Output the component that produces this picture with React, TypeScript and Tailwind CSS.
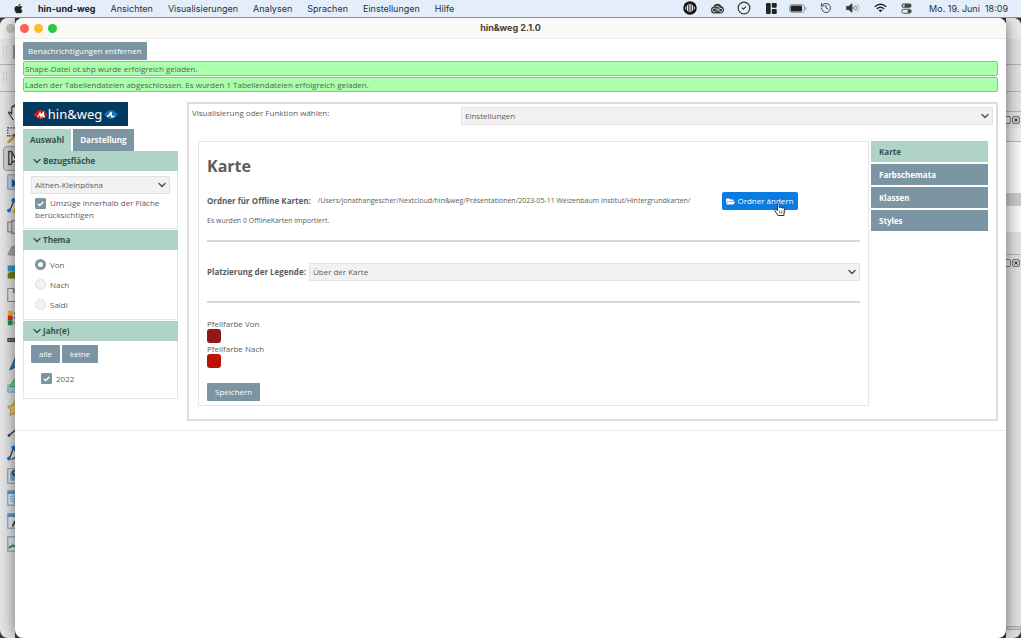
import { useState } from "react";
import type { ReactNode } from "react";
import { FaApple, FaFolderOpen } from "react-icons/fa";
import { ChevronDown, CircleCheck, History } from "lucide-react";

const menus = ["Ansichten", "Visualisierungen", "Analysen", "Sprachen", "Einstellungen", "Hilfe"];

function StatusIcons() {
  return (
    <div className="flex items-center text-[#333]">
      <span className="flex w-7 justify-center">
        <svg viewBox="0 0 28 28" className="size-3.5">
          <circle cx="14" cy="14" r="13.5" fill="#111" />
          <path d="M5.5 12v4M9 9v10M12.3 6.500v15M15.700 6.500v15M19 9v10M22.500 12v4" stroke="#fff" strokeWidth="1.900" strokeLinecap="round" />
        </svg>
      </span>
      <span className="flex w-[26px] justify-center">
        <svg viewBox="0 0 30 22" className="h-[11px] w-[15px]" fill="none">
          <path d="M8 21a7 7 0 0 1-1.500-13.600A9 9 0 0 1 23 6.500a7.500 7.500 0 0 1-1 14.500z" fill="#3a3a3a" />
          <path d="m15.500 16.500-5-5a3.500 3.500 0 1 0-2.500 6h3M11 7.500a5.500 5.500 0 0 1 8.500 3.500M13 10l6 6.500a3.600 3.600 0 1 0 .5-5l-2.500 2.500" stroke="#e3eefa" strokeWidth="1.700" />
        </svg>
      </span>
      <span className="flex w-7 justify-center">
        <CircleCheck className="size-3.5" strokeWidth={2} />
      </span>
      <span className="flex w-[26px] justify-center">
        <svg viewBox="0 0 20 20" className="size-[11px]" fill="#222">
          <rect x="0" y="0" width="8.500" height="20" rx="1.500" />
          <rect x="10.500" y="0" width="9" height="8.500" rx="1.500" />
          <rect x="10.500" y="11" width="9" height="9" rx="1.500" />
        </svg>
      </span>
      <span className="flex w-7 justify-center">
        <svg viewBox="0 0 36 18" className="h-[9px] w-[18px]">
          <rect x="1" y="1" width="30" height="16" rx="4.500" fill="none" stroke="#888" strokeWidth="1.600" />
          <rect x="3.200" y="3.200" width="23" height="11.600" rx="2.500" fill="#222" />
          <path d="M33 6c2.500 1 2.500 5 0 6z" fill="#888" />
        </svg>
      </span>
      <span className="flex w-7 justify-center">
        <History className="size-3" strokeWidth={1.8} />
      </span>
      <span className="flex w-[26px] justify-center">
        <svg viewBox="0 0 28 20" className="h-2.5 w-3.5" fill="none" stroke="#444" strokeWidth="1.800" strokeLinecap="round">
          <path d="M1 7h4l7-5.500v17L5 13H1z" fill="#333" />
          <path d="M16 7.500q2 2.500 0 5" />
          <path d="M19.500 5q4 5 0 10" stroke="#777" />
          <path d="M23 2.500q6 7.500 0 15" stroke="#aaa" />
        </svg>
      </span>
      <span className="flex w-7 justify-center">
        <svg viewBox="0 0 26 19" className="h-[10px] w-[13px]" fill="none" stroke="#222" strokeWidth="2.800">
          <path d="M1.500 7q11.500-10 23 0M5.700 11.300q7.300-6.300 14.600 0" />
          <path d="m13 18-4-4q4-3.200 8 0z" fill="#222" stroke="none" />
        </svg>
      </span>
      <span className="flex w-6 justify-center">
        <svg viewBox="0 0 22 22" className="size-[11px]">
          <rect x="1" y="1" width="20" height="8.500" rx="4.200" fill="#444" />
          <circle cx="5.500" cy="5.200" r="2.300" fill="#e3eefa" />
          <rect x="1.500" y="12.500" width="19" height="8" rx="4" fill="none" stroke="#444" strokeWidth="1.800" />
          <circle cx="16.500" cy="16.500" r="3.500" fill="#444" />
        </svg>
      </span>
    </div>
  );
}

function MenuBar() {
  return (
    <header className="flex h-[17px] items-center bg-[#e3eefa] pr-[13px] pb-px pl-[13px] font-[Inter,sans-serif] text-[9px] leading-none text-[#2c2f33]">
      <FaApple className="mr-3.5 size-[11px] text-[#222]" />
      <nav className="flex items-center gap-[15px]">
        <a href="#app" className="font-bold text-[#1f2225]">hin-und-weg</a>
        {menus.map((m) => (
          <a key={m} href={"#" + m}>{m}</a>
        ))}
      </nav>
      <div className="ml-auto flex items-center gap-[11px]">
        <StatusIcons />
        <time className="whitespace-pre">Mo. 19. Juni  18:09</time>
      </div>
    </header>
  );
}

const table = (
  <>
    <rect x="1" y="1" width="18" height="18" fill="#eaf2f8" stroke="#78a9cf" strokeWidth="1.500" />
    <path d="M1 3h18" stroke="#5b9bcb" strokeWidth="4" />
  </>
);

const tools: ReactNode[] = [
  <path d="M8 20 2 11q0-2 3 0l1 2V4q1.500-2 2.500 0V2q2-2 3 0v2q2-1.500 2.500 1l2 9-3 6" fill="#fff" stroke="#333" strokeWidth="1.400" />,
  <>
    <path d="M1 12V1h14v10H1" fill="none" stroke="#333" strokeWidth="1.500" strokeDasharray="2 1.500" />
    <path d="m1 20 9-9" stroke="#c9a22b" strokeWidth="3" />
    <path d="m8 9 4 4" stroke="#444" strokeWidth="2" />
  </>,
  <path d="M1 1v18M1 2h4M1 18h4M5 3v13l5-4z" fill="#fff" stroke="#333" strokeWidth="1.500" />,
  <>
    <rect x="1" y="1" width="16" height="18" fill="#bcd3e4" stroke="#6e8ca3" />
    <path d="m6 6 8 6-8 5z" fill="#1d5d94" />
  </>,
  <>
    <path d="m3 18 6-14 6 13" fill="none" stroke="#333" strokeWidth="1.500" />
    <circle cx="2.500" cy="17" r="2.500" fill="#1473e6" />
    <circle cx="8" cy="4" r="2.500" fill="#1473e6" />
    <path d="m8 20 4-7" stroke="#d9b02f" strokeWidth="3" />
  </>,
  <path d="M1 4h5v12H1zM6 2h13v16H6z" fill="#ddd" stroke="#888" strokeWidth="1.500" />,
  <path d="m1 16 5-10 12-3v14z" fill="#aaa" stroke="#888" />,
  <>
    <rect x="1" y="2" width="18" height="16" fill="#e6b52c" />
    <rect x="1" y="2" width="18" height="7" fill="#2d9bd5" />
    <path d="M1 12q7-5 18 1v5H1z" fill="#697e24" />
  </>,
  <path d="M1 2h7l4 5v11H1zM8 2v5h4" fill="#f1f1f1" stroke="#888" strokeWidth="1.300" />,
  <>
    <rect x="1" y="1" width="6" height="6" fill="#f2b620" />
    <rect x="1" y="7" width="6" height="6" fill="#e02b20" />
    <rect x="1" y="13" width="6" height="6" fill="#21934a" />
    <path d="M8.500 4h8M8.500 10h8M8.500 16h8" stroke="#555" strokeWidth="2" />
  </>,
  <path d="M1 8h18v4H1zM5 8v4M9 8v4" fill="#777" stroke="#444" strokeWidth="1.200" />,
  <path d="M4 18 11 2l7 15-6-3z" fill="#4f87b8" stroke="#315b80" strokeWidth="1.500" />,
  <>
    <path d="M1 10h17v9H1z" fill="#a5d8ec" stroke="#61a6c2" />
    <path d="m3 12 7-10 7 10z" fill="#80d58c" stroke="#3a9c4d" />
  </>,
  <path d="m10 1 3 6 6 1-5 5 2 6-6-3-6 3 1-6-4-5 6-1z" fill="#f2cf72" stroke="#c69b3c" strokeWidth="1.300" />,
  <>
    <path d="M3 15 18 3" stroke="#444" strokeWidth="1.800" />
    <circle cx="2.500" cy="15.500" r="1.800" fill="#444" />
  </>,
  <>
    <path d="M3 17 8 4l6 9-8 5" fill="none" stroke="#333" strokeWidth="1.500" />
    <circle cx="2.500" cy="17" r="2.500" fill="#1473e6" />
    <circle cx="8" cy="3" r="2.500" fill="#1473e6" />
  </>,
  <>
    <rect x="1" y="1" width="18" height="18" fill="#eee" stroke="#999" strokeWidth="1.500" />
    <rect x="4" y="4" width="14" height="12" fill="#74afe0" />
    <circle cx="10" cy="6" r="3" fill="none" stroke="#333" strokeWidth="1.500" />
  </>,
  <>
    {table}
    <path d="M4 8h3M4 11h3M4 14h3M9 6v12" stroke="#78a9cf" strokeWidth="1.500" />
  </>,
  <>
    {table}
    <path d="m7 15 4-8 5 6z" fill="#e28a3b" />
    <path d="m7 17 3-7" stroke="#333" strokeWidth="2" />
  </>,
  <>
    <rect x="1" y="1" width="18" height="18" fill="#dfeaf0" stroke="#78a9cf" strokeWidth="1.500" />
    <path d="m2 15 5-3 4 1 7-5" fill="none" stroke="#3b8759" strokeWidth="2.500" />
  </>,
];

function ToolStrip() {
  return (
    <aside className="w-[15px] shrink-0 overflow-hidden rounded-l-lg bg-[#e6e6e6]">
      <div className="flex h-[21px] items-center justify-end bg-[#efefef]">
        <span className="size-[9px] rounded-full bg-[#c9c9c9]" />
      </div>
      <div className="flex h-[26px] items-center justify-between border-b border-[#b5b5b5] pl-[3px]">
        <span className="h-3 w-1 border-x border-dotted border-[#c4c4c4]" />
        <span className="h-3.5 w-0.5 bg-[#8fa3b5]" />
      </div>
      <div className="flex h-[27px] items-center border-b border-[#b5b5b5] pl-[3px]">
        <span className="h-3 w-1 border-x border-dotted border-[#c4c4c4]" />
      </div>
      <div className="flex h-[463px] flex-col pt-[9px]">
        {tools.map((t, i) => (
          <span
            key={i}
            className={
              i === 2
                ? "ml-[3px] flex w-8 flex-1 items-center rounded-sm border border-[#999] bg-[#cfcfcf] pl-1"
                : "flex w-8 flex-1 items-center pl-[7px]"
            }
          >
            <svg viewBox="0 0 20 20" className="size-4 shrink-0">{t}</svg>
          </span>
        ))}
      </div>
    </aside>
  );
}

function DockButtons() {
  return (
    <div className="flex h-4 items-center justify-end gap-px pr-px">
      <svg viewBox="0 0 16 16" className="size-2 shrink-0" fill="none" stroke="#777" strokeWidth="2">
        <rect x="1" y="1" width="14" height="14" rx="3" />
      </svg>
      <svg viewBox="0 0 16 16" className="size-2 shrink-0" fill="#ccc" stroke="#777" strokeWidth="2">
        <rect x="1" y="1" width="14" height="14" rx="3" />
        <path d="m5 5 6 6m0-6-6 6" stroke="#333" />
      </svg>
    </div>
  );
}

function DockStrip() {
  return (
    <aside className="flex w-[15px] shrink-0 flex-col overflow-hidden rounded-r-lg bg-[#e2e2e2]">
      <div className="h-[21px] bg-[#ececec]" />
      <div className="h-[26px] border-b border-[#b5b5b5]" />
      <div className="h-[27px] border-b border-[#b5b5b5]" />
      <div className="h-5 border-b border-[#b5b5b5]" />
      <DockButtons />
      <div className="h-3.5 border-b border-[#b5b5b5] bg-[#ededed]" />
      <div className="h-[51px] bg-[#f7f7f7]" />
      <div className="h-[13px] bg-[#cbcbcb]" />
      <div className="h-[26px] bg-[#f7f7f7]" />
      <div className="h-[23px] border-b border-[#bbb]" />
      <DockButtons />
      <div className="mt-auto mb-2 h-1 border border-[#aaa] bg-[#ccc]" />
    </aside>
  );
}

function Select({ id, label, options }: { id: string; label?: string; options: string[] }) {
  return (
    <div className="relative flex-1">
      <select
        id={id}
        aria-label={label}
        className="block h-[18px] w-full appearance-none border border-[#e2e2e2] bg-[#f2f2f2] pr-5 pl-[3px] text-[8px] leading-none text-[#5c5c5c] outline-none"
      >
        {options.map((o) => (
          <option key={o}>{o}</option>
        ))}
      </select>
      <ChevronDown className="pointer-events-none absolute top-[3px] right-[2px] size-3 text-[#555]" strokeWidth={3} />
    </div>
  );
}

function Check({ id }: { id: string }) {
  return (
    <span className="inline-grid size-[11px] align-middle">
      <input id={id} type="checkbox" defaultChecked className="peer col-start-1 row-start-1 size-[11px] appearance-none rounded-[1px] border border-[#ccc] bg-[#f2f2f2] checked:border-[#7c95a3] checked:bg-[#7c95a3]" />
      <svg viewBox="0 0 11 11" className="pointer-events-none invisible col-start-1 row-start-1 size-[11px] peer-checked:visible">
        <path d="m2.800 5.700 2 1.900 3.500-3.800" fill="none" stroke="#fff" strokeWidth="1.400" />
      </svg>
    </span>
  );
}

function Section({ title, children }: { title: string; children: ReactNode }) {
  return (
    <section>
      <h2 className="flex h-5 items-center bg-[#b0d3c8] pl-2 text-[8px] font-bold text-[#33524a]">
        <ChevronDown className="size-3" strokeWidth={2.6} />
        {title}
      </h2>
      <div className="border border-t-0 border-[#e6e6e6] px-[7px]">{children}</div>
    </section>
  );
}

function Logo() {
  return (
    <div className="flex h-6 w-[105px] items-center justify-center bg-[#053a5f] text-white">
      <svg viewBox="0 0 28 18" className="h-[9px] w-[15px]">
        <path d="M0 9 9 1q5-2 10 0l9 8-9 8q-5 2-10 0z" fill="#d3201f" />
        <path d="M8 13q4-1 5-8l2 8q2-5 5-8l-1 8h4" fill="none" stroke="#fff" strokeWidth="2.600" />
      </svg>
      <span className="font-['Noto_Sans',sans-serif] text-[13px] leading-none">hin&amp;weg</span>
      <svg viewBox="0 0 28 18" className="ml-0.5 h-[9px] w-3.5">
        <path d="M0 9 9 1q5-2 10 0l9 8-9 8q-5 2-10 0z" fill="#1177bd" />
        <path d="M6 13q5-1 8-9l1 9h6" fill="none" stroke="#fff" strokeWidth="2.800" />
      </svg>
    </div>
  );
}

function Sidebar() {
  const [theme, setTheme] = useState("Von");
  return (
    <aside className="w-[155px] shrink-0">
      <Logo />
      <div role="tablist" className="mt-[3px] flex gap-0.5 text-[8px] font-bold">
        <button role="tab" aria-selected="true" className="h-[22px] bg-[#b0d3c8] px-[7px] text-[#33524a]">Auswahl</button>
        <button role="tab" aria-selected="false" className="h-[22px] bg-[#7c95a3] px-[7px] text-white">Darstellung</button>
      </div>
      <div className="flex flex-col gap-px text-[8px]">
        <Section title="Bezugsfläche">
          <div className="flex pt-[5px]">
            <Select id="area" label="Bezugsfläche" options={["Althen-Kleinpösna"]} />
          </div>
          <div className="px-1 pt-[3px] pb-2 leading-[11px]">
            <Check id="inner" />
            <label htmlFor="inner" className="pl-1">Umzüge innerhalb der Fläche berücksichtigen</label>
          </div>
        </Section>
        <Section title="Thema">
          <div role="radiogroup" aria-label="Thema" className="flex flex-col gap-[9px] px-1 pt-[9px] pb-[9px]">
            {["Von", "Nach", "Saldi"].map((t) => (
              <label key={t} className="flex h-[11px] items-center gap-1">
                <input
                  type="radio"
                  name="theme"
                  checked={theme === t}
                  onChange={() => setTheme(t)}
                  className="size-[11px] appearance-none rounded-full border border-[#ddd] bg-[#f2f2f2] checked:border-3 checked:border-[#7c95a3] checked:bg-white"
                />
                {t}
              </label>
            ))}
          </div>
        </Section>
        <Section title="Jahr(e)">
          <div className="flex gap-0.5 pt-1">
            <button className="h-[18px] rounded-[1px] bg-[#7c95a3] px-2 text-white">alle</button>
            <button className="h-[18px] rounded-[1px] bg-[#7c95a3] px-2 text-white">keine</button>
          </div>
          <div className="flex items-center gap-1 pt-2.5 pb-3.5 pl-2.5 leading-[11px]">
            <Check id="y2022" />
            <label htmlFor="y2022">2022</label>
          </div>
        </Section>
      </div>
    </aside>
  );
}

function Cursor() {
  return (
    <svg viewBox="0 0 24 28" className="pointer-events-none absolute top-2.5 right-3 h-3.5 w-3">
      <path d="M8 27 2 18q-2-4 1-4l4 3V3q1.500-3 3.500 0v8q2-2 3.500.5 2-1.500 3.500.8 2-1.200 3.500 1.200 2 5-1 9.500v4z" fill="#fff" stroke="#222" strokeWidth="1.800" />
      <path d="M11 17v6M14.500 17v6M18 17v6" stroke="#444" strokeWidth="1.300" />
    </svg>
  );
}

function Swatch({ id, label, color }: { id: string; label: string; color: string }) {
  return (
    <div className="flex flex-col items-start">
      <label htmlFor={id} className="leading-[11px]">{label}</label>
      <input
        id={id}
        type="color"
        defaultValue={color}
        className="size-3.5 appearance-none overflow-hidden rounded-[3px] [&::-webkit-color-swatch]:border-0 [&::-webkit-color-swatch-wrapper]:p-0"
      />
    </div>
  );
}

function Settings() {
  return (
    <div className="flex-1 border border-[#e6e6e6] px-2 pt-3.5 pb-1 text-[8px]">
      <h1 className="text-[16px] leading-5 font-bold text-[#5c5c5c]">Karte</h1>
      <div className="mt-4 flex h-[18px] items-center whitespace-nowrap">
        <strong>Ordner für Offline Karten:</strong>
        <span className="ml-[7px] text-[7px]">/Users/jonathangescher/Nextcloud/hin&amp;weg/Präsentationen/2023-05-11 Weizenbaum Institut/Hintergrundkarten/</span>
        <div className="relative ml-8 shrink-0">
          <button className="flex h-[18px] items-center gap-0.5 rounded-[2px] bg-[#0a7be0] px-1 text-white">
            <FaFolderOpen className="size-[9px]" />
            Ordner ändern
          </button>
          <Cursor />
        </div>
      </div>
      <p className="mt-[5px] text-[7px] leading-3">Es wurden 0 OfflineKarten importiert.</p>
      <hr className="mt-[13px] border-t-2 border-[#d8d8d8]" />
      <div className="mt-[21px] flex items-center gap-[3px]">
        <label htmlFor="legend" className="font-bold">Platzierung der Legende:</label>
        <Select id="legend" options={["Über der Karte"]} />
      </div>
      <hr className="mt-5 mb-[15px] border-t-2 border-[#d8d8d8]" />
      <Swatch id="from" label="Pfeilfarbe Von" color="#8f1818" />
      <Swatch id="to" label="Pfeilfarbe Nach" color="#bd1306" />
      <button className="mt-[15px] block h-[18px] rounded-[1px] bg-[#7c95a3] px-2 text-white">Speichern</button>
    </div>
  );
}

function AppWindow() {
  return (
    <main className="z-10 flex min-w-0 flex-1 flex-col overflow-hidden rounded-lg bg-white font-['Open_Sans',sans-serif] text-[8px] text-[#5c5c5c] shadow-[0_0_16px_rgba(0,0,0,0.55)]">
      <div className="grid h-[21px] grid-cols-[1fr_auto_1fr] items-center border-b border-[#ececec] bg-[#f9f9f7] px-[5px]">
        <div className="flex gap-[5px]">
          <span className="size-[9px] rounded-full bg-[#fe5f57]" />
          <span className="size-[9px] rounded-full bg-[#febb2e]" />
          <span className="size-[9px] rounded-full bg-[#28c840]" />
        </div>
        <span className="font-[Inter,sans-serif] text-[9px] font-bold text-[#404040]">hin&amp;weg 2.1.0</span>
      </div>
      <div className="border-b border-[#ebebeb] px-2 pt-[3px] pb-[9px]">
        <button className="block h-[18px] rounded-[1px] bg-[#7c95a3] px-[5px] text-white">Benachrichtigungen entfernen</button>
        <div className="mt-px flex flex-col gap-px">
          <p className="h-[15px] rounded-[2px] border border-[#9db79d] bg-[#aaffaa] pl-px leading-[13px]">Shape-Datei ot.shp wurde erfolgreich geladen.</p>
          <p className="h-[15px] rounded-[2px] border border-[#9db79d] bg-[#aaffaa] pl-px leading-[13px]">Laden der Tabellendateien abgeschlossen. Es wurden 1 Tabellendateien erfolgreich geladen.</p>
        </div>
        <div className="mt-2.5 flex items-start gap-[9px]">
          <Sidebar />
          <div className="min-w-0 flex-1 border-2 border-[#dedede] px-[3px] pt-[3px] pb-[13px]">
            <div className="grid grid-cols-[269px_1fr] items-start">
              <label htmlFor="view" className="leading-3">Visualisierung oder Funktion wählen:</label>
              <Select id="view" options={["Einstellungen"]} />
            </div>
            <div className="mt-4 flex items-start gap-0.5 pr-[5px] pl-1.5">
              <Settings />
              <nav className="flex w-[117px] shrink-0 flex-col gap-0.5 font-bold">
                <button className="h-[21px] bg-[#b0d3c8] px-2 text-left text-[#33524a]">Karte</button>
                {["Farbschemata", "Klassen", "Styles"].map((n) => (
                  <button key={n} className="h-[21px] bg-[#7c95a3] px-2 text-left text-white">{n}</button>
                ))}
              </nav>
            </div>
          </div>
        </div>
      </div>
    </main>
  );
}

export default function App() {
  return (
    <div className="flex min-h-screen flex-col bg-white pr-[3px] pb-[3px]">
      <MenuBar />
      <div className="flex flex-1 overflow-hidden border-t border-[#8a8f94] bg-[#3a3a3a]">
        <ToolStrip />
        <AppWindow />
        <DockStrip />
      </div>
    </div>
  );
}
